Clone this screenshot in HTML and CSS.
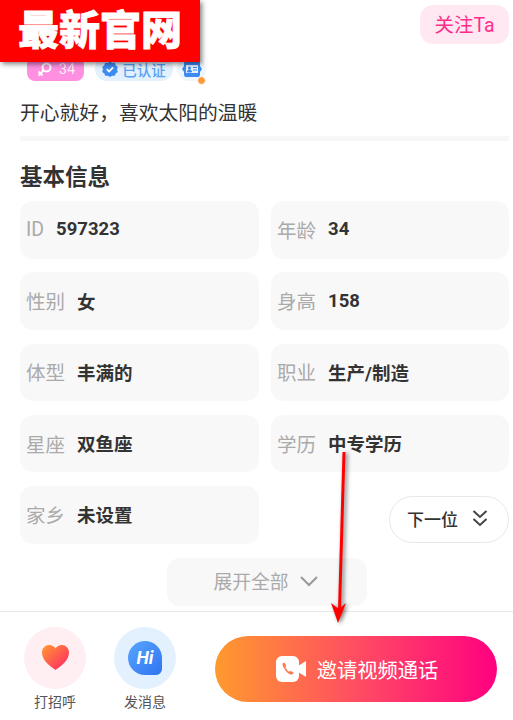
FILE: index.html
```html
<!DOCTYPE html>
<html lang="zh-CN">
<head>
    <meta charset="UTF-8">
    <meta name="viewport" content="width=device-width, initial-scale=1.0">
    <title>最新官网</title>
    <link rel="stylesheet" href="styles.css">
</head>
<body>
    <div class="page">
        <div class="top">
            <button class="follow">关注Ta</button>
        </div>
        <div class="tags">
            <span class="tag tag-age">
                <svg width="17" height="17" viewBox="0 0 17 17" fill="none" stroke="#fff" stroke-width="2"><circle cx="10.5" cy="6.5" r="4"/><path d="M7.5 9.5 2.5 14.5M2.5 10.5l4 4"/></svg>
                <span class="tag-num">34</span>
            </span>
            <span class="tag tag-auth">
                <svg width="16" height="16" viewBox="0 0 16 16"><path d="M8 .5l2.200 1.400 2.600-.1 1 2.400 2 1.700L15 8.400l.8 2.500-2.100 1.500-1 2.400-2.600-.1L8 16l-2.100-1.300-2.600.1-1-2.400L.2 10.900 1 8.400.2 5.900l2-1.700 1-2.400 2.600.1z" fill="#3d8bf2"/><path d="M4.800 8.200l2.300 2.300 4-4.200" fill="none" stroke="#fff" stroke-width="1.800"/></svg>
                已认证
            </span>
            <span class="tag-card">
                <svg width="20" height="18" viewBox="0 0 20 18"><path d="M3 1h14l1 2v3l2 3-2 3v3l-1 2H3l-1-2v-3L0 9l2-3V3z" fill="#3d8bf2"/><rect x="4" y="5" width="12" height="8" fill="#e3f1ff"/><circle cx="7.500" cy="8" r="1.500" fill="#3d8bf2"/><path d="M5.500 12c0-3 4-3 4 0zM11 7.500h4M11 10h4" fill="#3d8bf2" stroke="#3d8bf2"/></svg>
                <span class="tag-dot"></span>
            </span>
        </div>
        <p class="motto">开心就好，喜欢太阳的温暖</p>
        <div class="divider"></div>
        <h2 class="section-title">基本信息</h2>
        <div class="info-grid">
            <div class="info-item"><span class="info-label">ID</span><b class="info-value">597323</b></div>
            <div class="info-item"><span class="info-label">年龄</span><b class="info-value">34</b></div>
            <div class="info-item"><span class="info-label">性别</span><b class="info-value">女</b></div>
            <div class="info-item"><span class="info-label">身高</span><b class="info-value">158</b></div>
            <div class="info-item"><span class="info-label">体型</span><b class="info-value">丰满的</b></div>
            <div class="info-item"><span class="info-label">职业</span><b class="info-value">生产/制造</b></div>
            <div class="info-item"><span class="info-label">星座</span><b class="info-value">双鱼座</b></div>
            <div class="info-item"><span class="info-label">学历</span><b class="info-value">中专学历</b></div>
            <div class="info-item"><span class="info-label">家乡</span><b class="info-value">未设置</b></div>
            <div class="next-cell">
                <button class="next">
                    下一位
                    <svg width="16" height="18" viewBox="0 0 16 18" fill="none" stroke="#444" stroke-width="2"><path d="M1.500 2l6.500 6 6.500-6M1.500 10l6.500 6 6.500-6"/></svg>
                </button>
            </div>
        </div>
        <button class="expand">
            展开全部
            <svg width="20" height="12" viewBox="0 0 20 12" fill="none" stroke="#999" stroke-width="2"><path d="M2 2l8 8 8-8"/></svg>
        </button>
        <div class="footer">
            <div class="action">
                <span class="action-icon action-heart">
                    <svg width="31" height="27" viewBox="0 0 32 30">
                        <defs><linearGradient id="heartFill" x1="0" y1="0" x2="1" y2="1"><stop offset="0" stop-color="#ff9a30"/><stop offset="1" stop-color="#ff1f6b"/></linearGradient></defs>
                        <path d="M16 29C9 24 1 18 1 9.500 1 4.500 4.800 1 9 1c3 0 5.500 1.500 7 4 1.500-2.500 4-4 7-4 4.200 0 8 3.500 8 8.500C31 18 23 24 16 29z" fill="url(#heartFill)"/>
                    </svg>
                </span>
                <span class="action-label">打招呼</span>
            </div>
            <div class="action">
                <span class="action-icon action-hi">
                    <span class="hi-bubble">Hi</span>
                </span>
                <span class="action-label">发消息</span>
            </div>
            <button class="call">
                <svg width="30" height="26" viewBox="0 0 30 26"><rect x="0" y="0" width="23" height="26" rx="6" fill="#fff"/><path d="M22 10l8-5v16l-8-5z" fill="#fff"/><path d="M7 7c-1 1-.5 3 1.500 6s4.500 5.500 6.500 5.500c1.500 0 2.500-1 2.500-1.800l-3-2-1.200 1c-1-.3-3.500-3-4-4.500l1-1.300-1.500-3z" fill="#ff7a4a"/></svg>
                邀请视频通话
            </button>
        </div>
    </div>

    <!-- overlays added on top of the screenshot -->
    <div class="banner">最新官网</div>
    <svg class="arrow" width="40" height="180" viewBox="0 0 40 180">
        <path d="M24 2 19.500 160" stroke="#f00" stroke-width="3" fill="none"/>
        <path d="M11 153 18 173 26 153 19 159z" fill="#f00"/>
    </svg>
</body>
</html>
```

FILE: styles.css
```css
* {
    box-sizing: border-box;
}

body {
    margin: 0;
    font-family: Roboto, "Noto Sans CJK SC", sans-serif;
    background-color: #fff;
    color: #333;
    overflow: hidden;
}

button {
    font-family: inherit;
    border: none;
    padding: 0;
}

.page {
    position: relative;
    height: 720px;
    padding: 5px 4px 0 20px;
}

.top {
    display: flex;
    justify-content: flex-end;
    height: 39px;
}

.follow {
    width: 89px;
    height: 39px;
    padding-bottom: 2px;
    border-radius: 13px;
    background-color: #ffe8f2;
    color: #ff2e8a;
    font-size: 19.500px;
}

.tags {
    display: flex;
    align-items: center;
    gap: 11px;
    height: 24px;
    margin: 13px 0 0 7px;
}

.tag {
    display: flex;
    align-items: center;
    justify-content: center;
    gap: 4px;
    height: 24px;
    border-radius: 8px;
    font-size: 14.500px;
}

.tag-age {
    width: 57px;
    background-color: #ff8fe0;
    color: #fff;
}

.tag-num {
    margin-left: 2px;
    opacity: 0.85;
}

.tag-auth {
    width: 78px;
    border-radius: 12px;
    background-color: #e3f1ff;
    color: #5aa3f5;
    font-weight: 500;
}

.tag-card {
    position: relative;
    display: flex;
    align-items: center;
    justify-content: center;
    width: 29px;
    height: 24px;
    margin-left: -7px;
    border-radius: 12px;
    background-color: #eef6ff;
}

.tag-dot {
    position: absolute;
    right: 0;
    bottom: -4px;
    width: 9px;
    height: 9px;
    border-radius: 50%;
    background-color: #ff9a3c;
    border: 1px solid #fff;
}

.motto {
    margin: 17px 0 0;
    font-size: 19.800px;
    line-height: 32px;
    color: #333;
}

.divider {
    width: 489px;
    height: 5px;
    margin-top: 6px;
    background-color: #f7f7f7;
}

.section-title {
    margin: 19px 0 0;
    font-size: 22.500px;
    line-height: 34px;
    font-weight: 700;
    color: #333;
}

.info-grid {
    display: grid;
    grid-template-columns: 239px 238px;
    grid-auto-rows: 57.500px;
    column-gap: 12px;
    row-gap: 13.750px;
    margin-top: 7px;
}

.info-item {
    display: flex;
    align-items: center;
    gap: 12px;
    padding: 0 0 1px 6px;
    border-radius: 13px;
    background-color: #f8f8f8;
}

.info-label {
    font-size: 19.500px;
    color: #aaa;
}

.info-value {
    font-size: 18.500px;
    font-weight: 700;
    color: #333;
}

.next-cell {
    display: flex;
    justify-content: flex-end;
    align-items: flex-end;
    padding-bottom: 1px;
}

.next {
    display: flex;
    align-items: center;
    justify-content: center;
    gap: 14px;
    width: 120px;
    height: 47px;
    padding: 0 3px 2px 0;
    border: 1px solid #e8e8e8;
    border-radius: 24px;
    background-color: #fff;
    font-size: 17px;
    font-weight: 500;
    color: #333;
}

.expand {
    display: flex;
    align-items: center;
    justify-content: center;
    gap: 10px;
    width: 200px;
    height: 48px;
    margin: 14px 0 0 147px;
    padding: 0 2px 2px 0;
    border-radius: 13px;
    background-color: #f8f8f8;
    font-size: 18.800px;
    color: #aaa;
}

.footer {
    display: flex;
    align-items: flex-start;
    width: 513px;
    height: 109px;
    margin: 5px 0 0 -20px;
    padding: 15px 16px 0 24px;
    border-top: 1px solid #e8e8e8;
}

.action {
    display: flex;
    flex-direction: column;
    align-items: center;
    width: 62px;
    margin-right: 28px;
}

.action-icon {
    display: flex;
    align-items: center;
    justify-content: center;
    width: 62px;
    height: 62px;
    border-radius: 50%;
}

.action-heart {
    background-color: #ffeef2;
}

.action-hi {
    background-color: #e3f1ff;
}

.hi-bubble {
    display: flex;
    align-items: center;
    justify-content: center;
    width: 34px;
    height: 34px;
    border-radius: 50% 50% 6px 50%;
    background: linear-gradient(135deg, #5aa5ff, #2f74f0);
    color: #fff;
    font-size: 18px;
    font-weight: 700;
    font-style: italic;
}

.action-label {
    margin-top: 2px;
    font-size: 14px;
    line-height: 22px;
    color: #555;
    white-space: nowrap;
}

.call {
    display: flex;
    align-items: center;
    justify-content: center;
    gap: 11px;
    width: 282px;
    height: 66px;
    margin: 9px 0 0 11px;
    padding-left: 2px;
    border-radius: 33px;
    background: linear-gradient(90deg, #ff9a2e, #ff4d62 50%, #ff0080);
    color: #fff;
    font-size: 20.300px;
}

.banner {
    position: absolute;
    top: 0;
    left: 0;
    width: 200px;
    height: 62px;
    background-color: #f00;
    box-shadow: 2px 2px 5px rgba(0, 0, 0, 0.5);
    color: #fff;
    font-size: 41px;
    font-weight: 900;
    line-height: 62px;
    text-align: center;
    white-space: nowrap;
    -webkit-text-stroke: 0.8px #fff;
}

.arrow {
    position: absolute;
    top: 450px;
    left: 320px;
    filter: drop-shadow(2px 1px 2px rgba(0, 0, 0, 0.55));
}
```
